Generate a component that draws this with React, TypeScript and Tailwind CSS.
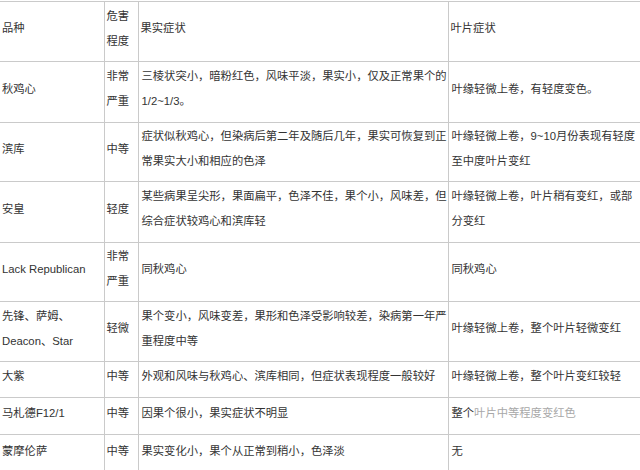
const rows = [
  {
    name: ["秋鸡心"],
    level: ["非常", "严重"],
    fruit: ["三棱状突小，暗粉红色，风味平淡，果实小，仅及正常果个的", "1/2~1/3。"],
    leaf: ["叶缘轻微上卷，有轻度变色。"],
    h: "h-[61px]",
  },
  {
    name: ["滨库"],
    level: ["中等"],
    fruit: ["症状似秋鸡心，但染病后第二年及随后几年，果实可恢复到正", "常果实大小和相应的色泽"],
    leaf: ["叶缘轻微上卷，9~10月份表现有轻度", "至中度叶片变红"],
    h: "h-[59px]",
  },
  {
    name: ["安皇"],
    level: ["轻度"],
    fruit: ["某些病果呈尖形，果面扁平，色泽不佳，果个小，风味差，但", "综合症状较鸡心和滨库轻"],
    leaf: ["叶缘轻微上卷，叶片稍有变红，或部", "分变红"],
    h: "h-[61px]",
  },
  {
    name: ["Lack Republican"],
    level: ["非常", "严重"],
    fruit: ["同秋鸡心"],
    leaf: ["同秋鸡心"],
    h: "h-[59px]",
  },
  {
    name: ["先锋、萨姆、", "Deacon、Star"],
    level: ["轻微"],
    fruit: ["果个变小，风味变差，果形和色泽受影响较差，染病第一年严", "重程度中等"],
    leaf: ["叶缘轻微上卷，整个叶片轻微变红"],
    h: "h-[60px]",
  },
  {
    name: ["大紫"],
    level: ["中等"],
    fruit: ["外观和风味与秋鸡心、滨库相同，但症状表现程度一般较好"],
    leaf: ["叶缘轻微上卷，整个叶片变红较轻"],
    h: "h-[36px]",
  },
  {
    name: ["马札德F12/1"],
    level: ["中等"],
    fruit: ["因果个很小，果实症状不明显"],
    leaf: null,
    h: "h-[37px]",
  },
  {
    name: ["蒙摩伦萨"],
    level: ["中等"],
    fruit: ["果实变化小，果个从正常到稍小，色泽淡"],
    leaf: ["无"],
    h: "h-[40px]",
  },
];

function Lines({ lines }: { lines: string[] }) {
  return (
    <>
      {lines.map((l, i) => (
        <div key={i} className="whitespace-nowrap">
          {l}
        </div>
      ))}
    </>
  );
}

const cell = "border-b border-r border-[#cacaca] pl-[2px] pb-[6px] align-middle";

export default function App() {
  return (
    <div
      className="w-[640px] h-[470px] overflow-hidden bg-white pt-px text-[#333] text-[11.3px] leading-[25px]"
      style={{ fontFamily: '"Liberation Sans", "Noto Sans CJK SC", sans-serif' }}
    >
      <table className="w-[640px] table-fixed border-collapse">
        <colgroup>
          <col className="w-[104px]" />
          <col className="w-[34px]" />
          <col className="w-[310px]" />
          <col className="w-[192px]" />
        </colgroup>
        <tbody>
          <tr className="h-[60px] border-t border-[#cacaca]">
            <td className={cell}>品种</td>
            <td className={cell}>
              <Lines lines={["危害", "程度"]} />
            </td>
            <td className={cell}>果实症状</td>
            <td className={cell + " border-r-0"}>叶片症状</td>
          </tr>
          {rows.map((r, i) => (
            <tr key={i} className={r.h}>
              <td className={cell}>
                <Lines lines={r.name} />
              </td>
              <td className={cell}>
                <Lines lines={r.level} />
              </td>
              <td className={cell + " pl-[3px]"}>
                <Lines lines={r.fruit} />
              </td>
              <td className={cell + " border-r-0 pl-[3px]"}>
                {r.leaf ? (
                  <Lines lines={r.leaf} />
                ) : (
                  <div className="whitespace-nowrap">
                    整个<span className="text-[#a8a8a8]">叶片中等程度变红色</span>
                  </div>
                )}
              </td>
            </tr>
          ))}
        </tbody>
      </table>
    </div>
  );
}
